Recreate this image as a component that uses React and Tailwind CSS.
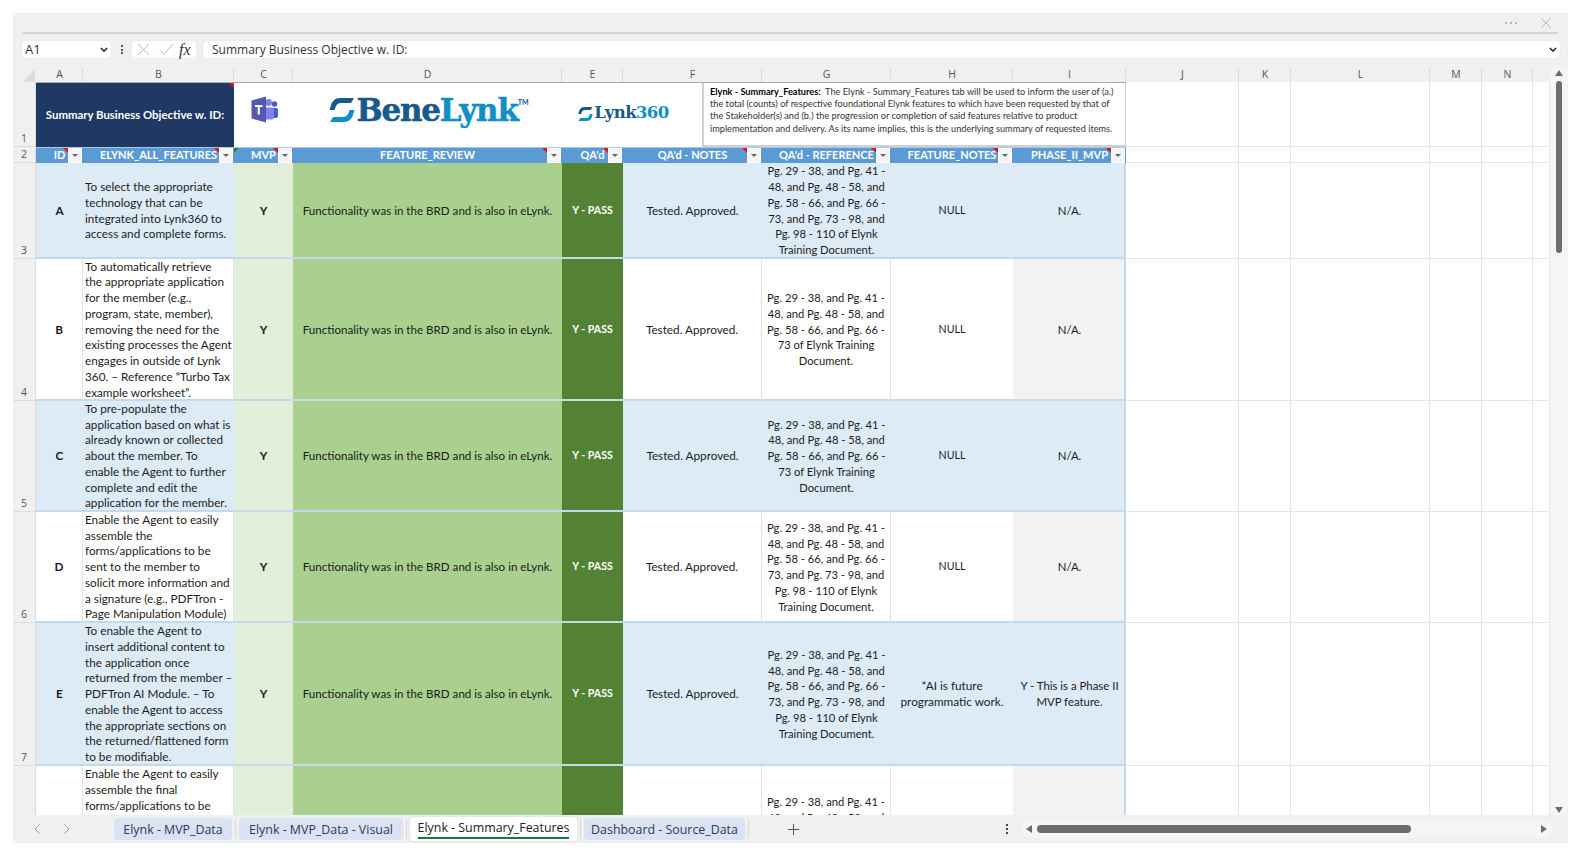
const COLS = ["A", "B", "C", "D", "E", "F", "G", "H", "I", "J", "K", "L", "M", "N"];
const SPARE = ["J", "K", "L", "M", "N", "O"];
const PASS = "Functionality was in the BRD and is also in eLynk.";

const ROWS = [
  {
    no: 3, id: "A", tint: true, feature: ["To select the appropriate", "technology that can be", "integrated into Lynk360 to", "access and complete forms."],
    ref: ["Pg. 29 - 38, and Pg. 41 -", "48, and Pg. 48 - 58, and", "Pg. 58 - 66, and Pg. 66 -", "73, and Pg. 73 - 98, and", "Pg. 98 - 110 of Elynk", "Training Document."],
    notes: ["NULL"], phase: ["N/A."],
  },
  {
    no: 4, id: "B", feature: ["To automatically retrieve", "the appropriate application", "for the member (e.g.,", "program, state, member),", "removing the need for the", "existing processes the Agent", "engages in outside of Lynk", "360. – Reference “Turbo Tax", "example worksheet”."],
    ref: ["Pg. 29 - 38, and Pg. 41 -", "48, and Pg. 48 - 58, and", "Pg. 58 - 66, and Pg. 66 -", "73 of Elynk Training", "Document."],
    notes: ["NULL"], phase: ["N/A."],
  },
  {
    no: 5, id: "C", tint: true, feature: ["To pre-populate the", "application based on what is", "already known or collected", "about the member. To", "enable the Agent to further", "complete and edit the", "application for the member."],
    ref: ["Pg. 29 - 38, and Pg. 41 -", "48, and Pg. 48 - 58, and", "Pg. 58 - 66, and Pg. 66 -", "73 of Elynk Training", "Document."],
    notes: ["NULL"], phase: ["N/A."],
  },
  {
    no: 6, id: "D", feature: ["Enable the Agent to easily", "assemble the", "forms/applications to be", "sent to the member to", "solicit more information and", "a signature (e.g., PDFTron -", "Page Manipulation Module)"],
    ref: ["Pg. 29 - 38, and Pg. 41 -", "48, and Pg. 48 - 58, and", "Pg. 58 - 66, and Pg. 66 -", "73, and Pg. 73 - 98, and", "Pg. 98 - 110 of Elynk", "Training Document."],
    notes: ["NULL"], phase: ["N/A."],
  },
  {
    no: 7, id: "E", tint: true, feature: ["To enable the Agent to", "insert additional content to", "the application once", "returned from the member –", "PDFTron AI Module. – To", "enable the Agent to access", "the appropriate sections on", "the returned/flattened form", "to be modifiable."],
    ref: ["Pg. 29 - 38, and Pg. 41 -", "48, and Pg. 48 - 58, and", "Pg. 58 - 66, and Pg. 66 -", "73, and Pg. 73 - 98, and", "Pg. 98 - 110 of Elynk", "Training Document."],
    notes: ["*AI is future", "programmatic work."], phase: ["Y - This is a Phase II", "MVP feature."],
  },
];

const HEADERS = [
  { label: "ID" },
  { label: "ELYNK_ALL_FEATURES" },
  { label: "MVP", green: true },
  { label: "FEATURE_REVIEW" },
  { label: "QA'd" },
  { label: "QA'd - NOTES" },
  { label: "QA'd - REFERENCE" },
  { label: "FEATURE_NOTES" },
  { label: "PHASE_II_MVP" },
];

function Lines({ lines }) {
  return (
    <div>
      {lines.map((l, i) => (
        <div key={i} className="h-[15.75px] leading-[15.75px] whitespace-nowrap">{l}</div>
      ))}
    </div>
  );
}

function RowHead({ children }) {
  return (
    <div className="flex items-end justify-center bg-[#f0f0f0] border-r border-b border-[#dcdcdc] text-[10.5px] leading-[15px] text-[#555] [font-family:'Open_Sans',sans-serif]">
      {children}
    </div>
  );
}

function Spare() {
  return SPARE.map((c) => (
    <div key={c} className="bg-white border-r border-b border-[#e6e6e6]" />
  ));
}

function Corner({ className }) {
  return <div className={`absolute top-0 w-0 h-0 border-t-[5px] border-l-[5px] border-l-transparent border-t-[#e8101c] ${className}`} />;
}

function HeaderCell({ label, green }) {
  return (
    <div className="relative flex items-center justify-center bg-[#5b9bd5] border-t border-[#a9c8e8] text-white font-bold text-[11px] whitespace-nowrap">
      {green && <div className="absolute top-0 left-0 w-0 h-0 border-t-[5px] border-r-[5px] border-r-transparent border-t-[#1f8a2d]" />}
      {label}
      <Corner className="right-[15px]" />
      <div className="absolute right-[1px] top-0 bottom-0 w-[14px] flex items-center justify-center bg-[#f4f4f4] border border-white">
        <div className="w-0 h-0 border-x-[3px] border-x-transparent border-t-[3px] border-t-[#666]" />
      </div>
    </div>
  );
}

function DataRow({ row }) {
  const tint = row.tint ? "bg-[#ddebf7]" : "bg-white border-r border-[#e3e3e3]";
  const base = "flex items-center justify-center text-center border-b-2 border-b-[#c3d9ee] pt-[1px]";
  return (
    <>
      <RowHead>{row.no}</RowHead>
      <div className={`${base} ${tint} font-bold`}>{row.id}</div>
      <div className={`${base} ${tint} !justify-start !text-left pl-[2px]`}><Lines lines={row.feature} /></div>
      <div className={`${base} bg-[#e2efda] font-bold`}>Y</div>
      <div className={`${base} bg-[#a9d08e] text-[11.6px]`}>{PASS}</div>
      <div className={`${base} bg-[#548235] text-white font-bold text-[10.6px]`}>Y - PASS</div>
      <div className={`${base} ${tint}`}>Tested. Approved.</div>
      <div className={`${base} ${tint} text-[11.2px]`}><Lines lines={row.ref} /></div>
      <div className={`${base} ${row.tint ? "bg-[#ddebf7]" : "bg-white"} ${row.notes.length === 1 ? "text-[10.6px]" : ""}`}><Lines lines={row.notes} /></div>
      <div className={`${base} ${row.tint ? "bg-[#ddebf7]" : "bg-[#f2f2f2]"} border-r-2 border-r-[#c3d9ee] pl-[2px] text-[11.4px]`}><Lines lines={row.phase} /></div>
      <Spare />
    </>
  );
}

function LastRow() {
  return (
    <>
      <RowHead />
      <div className="bg-white border-r border-[#e3e3e3]" />
      <div className="bg-white border-r border-[#e3e3e3] pl-[2px]">
        <Lines lines={["Enable the Agent to easily", "assemble the final", "forms/applications to be"]} />
      </div>
      <div className="bg-[#e2efda]" />
      <div className="bg-[#a9d08e]" />
      <div className="bg-[#548235]" />
      <div className="bg-white border-r border-[#e3e3e3]" />
      <div className="bg-white border-r border-[#e3e3e3] pt-[28px] text-center text-[11.2px]">
        <Lines lines={["Pg. 29 - 38, and Pg. 41 -", "48, and Pg. 48 - 58, and"]} />
      </div>
      <div className="bg-white" />
      <div className="bg-[#f2f2f2] border-r-2 border-r-[#c3d9ee]" />
      <Spare />
    </>
  );
}

function SwooshIcon({ className }) {
  return (
    <svg viewBox="0 0 26 24" className={className}>
      <path d="M25 0 L22 5 H12 C9.5 5 7.5 6.5 6.5 9 L5.5 12 H0.5 L2 7 C3.2 2.8 6.5 0 11 0 Z" fill="#17598a" />
      <path d="M25.5 12 L24 17 C22.8 21.2 19.5 24 15 24 H1 L4 19 H14 C16.5 19 18.5 17.5 19.5 15 L20.5 12 Z" fill="#0f8fc6" />
    </svg>
  );
}

function TeamsIcon() {
  return (
    <svg viewBox="0 0 27 27" className="w-[27px] h-[27px]">
      <circle cx="23.5" cy="8" r="2.8" fill="#5059c9" />
      <rect x="19" y="12" width="8" height="10" rx="2" fill="#5059c9" />
      <circle cx="17.5" cy="6.5" r="3.5" fill="#7b83eb" />
      <rect x="13" y="11.5" width="10" height="12" rx="2.5" fill="#7b83eb" />
      <path d="M0.5 4.5 L15 0.5 V26.5 L0.5 22.5 Z" fill="#5558af" />
      <path d="M4 9 H11.5 V11 H8.8 V18.5 H6.7 V11 H4 Z" fill="#fff" />
    </svg>
  );
}

function TitleStrip() {
  return (
    <div className="flex items-center justify-end h-[19px] pr-[17px] gap-[24px]">
      <div className="flex gap-[3px]">
        <span className="w-[2px] h-[2px] rounded-full bg-[#a8a8a8]" />
        <span className="w-[2px] h-[2px] rounded-full bg-[#a8a8a8]" />
        <span className="w-[2px] h-[2px] rounded-full bg-[#a8a8a8]" />
      </div>
      <svg viewBox="0 0 10 10" className="w-[10px] h-[10px]" stroke="#b0b0b0" strokeWidth="0.9">
        <path d="M0 0 L10 10 M10 0 L0 10" />
      </svg>
    </div>
  );
}

function FormulaBar() {
  return (
    <div className="flex items-stretch h-[19px] mt-[6px] ml-[8px] mr-[7px] [font-family:'Open_Sans',sans-serif] text-[12px] text-[#333]">
      <div className="flex items-center justify-between w-[91px] bg-white rounded-[5px] border border-[#ececec] pl-[3px] pr-[3px]">
        <span className="text-[13px]">A1</span>
        <svg viewBox="0 0 10 6" className="w-[8px] h-[5px]" fill="none" stroke="#222" strokeWidth="1.8"><path d="M1 1 L5 5 L9 1" /></svg>
      </div>
      <div className="flex flex-col items-center justify-center gap-[1.5px] w-[19px]">
        <span className="w-[2px] h-[2px] bg-[#555]" />
        <span className="w-[2px] h-[2px] bg-[#555]" />
        <span className="w-[2px] h-[2px] bg-[#555]" />
      </div>
      <div className="flex items-center w-[66px] bg-white rounded-[5px] border border-[#ececec] pl-[6px]">
        <svg viewBox="0 0 11 11" className="w-[11px] h-[11px]" stroke="#bcbcbc" fill="none"><path d="M0 0 L11 11 M11 0 L0 11" /></svg>
        <svg viewBox="0 0 14 11" className="w-[14px] h-[11px] ml-[10px]" stroke="#bcbcbc" fill="none"><path d="M0.5 6 L5 10.5 L13.5 0.5" /></svg>
        <span className="ml-[6px] text-[16px] italic text-[#333] [font-family:'Liberation_Serif',serif]">fx</span>
      </div>
      <div className="flex items-center justify-between flex-1 ml-[5px] bg-white rounded-[5px] border border-[#ececec] pl-[9px] pr-[3px]">
        <span>Summary Business Objective w. ID:</span>
        <svg viewBox="0 0 10 6" className="w-[8px] h-[5px]" fill="none" stroke="#222" strokeWidth="1.8"><path d="M1 1 L5 5 L9 1" /></svg>
      </div>
    </div>
  );
}

function BoxText() {
  return (
    <>
      <div className="whitespace-nowrap"><b className="text-black">Elynk - Summary_Features:</b>&nbsp; The Elynk - Summary_Features tab will be used to inform the user of (a.)</div>
      <div className="whitespace-nowrap">the total (counts) of respective foundational Elynk features to which have been requested by that of</div>
      <div className="whitespace-nowrap">the Stakeholder(s) and (b.) the progression or completion of said features relative to product</div>
      <div className="whitespace-nowrap">implementation and delivery. As its name implies, this is the underlying summary of requested items.</div>
    </>
  );
}

function Sheet() {
  return (
    <div className="grid grid-cols-[23px_47px_151px_59px_269px_61px_139px_129px_122px_113px_113px_52px_139px_52px_51px_17px] grid-rows-[14px_65px_16px_96px_142px_111px_111px_143px_150px] w-[1537px] h-[747px] overflow-hidden [font-family:Lato,sans-serif] text-[11.75px] text-[#1c1c1c]">
      {/* column letters */}
      <div className="relative bg-[#f0f0f0]">
        <div className="absolute right-[1px] bottom-0 w-0 h-0 border-b-[13px] border-l-[12px] border-l-transparent border-b-[#dcdcdc]" />
      </div>
      {COLS.map((c) => (
        <div key={c} className="flex items-center justify-center bg-[#f0f0f0] border-r border-[#dcdcdc] pl-[1px] text-[10.5px] text-[#555] [font-family:'Open_Sans',sans-serif]">{c}</div>
      ))}
      <div className="bg-[#f0f0f0]" />

      {/* row 1: title and logos */}
      <RowHead>1</RowHead>
      <div className="col-span-2 relative flex items-center justify-center bg-[#1f3864] text-white font-bold text-[11.4px] border-t border-[#aaa]">
        Summary Business Objective w. ID:
        <Corner className="right-0" />
      </div>
      <div className="flex items-center justify-center bg-white border-t border-[#aaa] pl-[2px] pb-[11px]"><TeamsIcon /></div>
      <div className="flex items-center justify-center bg-white border-t border-[#aaa] pl-[3px] pb-[11px]">
        <SwooshIcon className="w-[26px] h-[24px] mr-[1px]" />
        <span className="[font-family:'DejaVu_Serif',serif] font-bold text-[31px] leading-[30px] tracking-[-1.2px] [-webkit-text-stroke:0.5px]">
          <span className="text-[#17598a]">Bene</span><span className="text-[#0f8fc6]">Lynk</span>
        </span>
        <span className="self-start mt-[14px] text-[7px] font-bold text-[#17598a]">TM</span>
      </div>
      <div className="col-span-5 flex bg-white border-t border-[#aaa]">
        <div className="flex items-center justify-center shrink-0 w-[140px] pr-[17px] pb-[3px]">
          <SwooshIcon className="w-[15px] h-[14px] mr-[1px]" />
          <span className="[font-family:'DejaVu_Serif',serif] font-bold text-[16.5px] tracking-[-0.6px]">
            <span className="text-[#17598a]">Lynk</span><span className="text-[#0f8fc6]">360</span>
          </span>
        </div>
        <div className="flex-1 min-w-0 h-[64px] bg-white border-l-2 border-b-2 border-r border-[#d0d0d0] pl-[6px] pt-[3px] text-[9.2px] leading-[12.2px] text-[#333]">
          <BoxText />
        </div>
      </div>
      <Spare />

      {/* row 2: table header */}
      <RowHead>2</RowHead>
      {HEADERS.map((h) => <HeaderCell key={h.label} {...h} />)}
      <Spare />

      {ROWS.map((r) => <DataRow key={r.no} row={r} />)}
      <LastRow />
    </div>
  );
}

function VScroll() {
  return (
    <div className="flex flex-col items-center w-[18px] h-[747px] bg-[#f5f5f5] rounded-[5px] pt-[2px] pb-[2px]">
      <div className="w-0 h-0 border-x-[4px] border-x-transparent border-b-[6px] border-b-[#6d6d6d]" />
      <div className="w-[6px] h-[172px] mt-[5px] rounded-full bg-[#6d6d6d]" />
      <div className="flex-1" />
      <div className="w-0 h-0 border-x-[4px] border-x-transparent border-t-[6px] border-t-[#6d6d6d]" />
    </div>
  );
}

function Tab({ label, active, className }) {
  if (active) {
    return (
      <div className={`flex flex-col items-center h-[24px] bg-white rounded-[4px] shadow-[0_0_2px_rgba(0,0,0,0.15)] ${className}`}>
        <span className="mt-[3px] leading-[16px] text-[#222]">{label}</span>
        <span className="w-[151px] h-[2px] mt-[1px] bg-[#107c41]" />
      </div>
    );
  }
  return (
    <div className={`flex items-center justify-center h-[22px] pt-[2px] bg-[#dae3f3] rounded-[4px] text-[#2d3a52] ${className}`}>{label}</div>
  );
}

function TabBar() {
  return (
    <div className="flex items-center h-[28px] pl-[21px] [font-family:'Open_Sans',sans-serif] text-[12.4px]">
      <svg viewBox="0 0 6 10" className="w-[6px] h-[10px]" fill="none" stroke="#9a9a9a"><path d="M5.5 0.5 L1 5 L5.5 9.5" /></svg>
      <svg viewBox="0 0 6 10" className="w-[6px] h-[10px] ml-[24px]" fill="none" stroke="#9a9a9a"><path d="M0.5 0.5 L5 5 L0.5 9.5" /></svg>
      <Tab label="Elynk - MVP_Data" className="w-[118px] ml-[44px]" />
      <span className="w-px h-[20px] mx-[3px] bg-[#d8d8d8]" />
      <Tab label="Elynk - MVP_Data - Visual" className="w-[164px]" />
      <span className="w-px h-[20px] mx-[3px] bg-[#d8d8d8]" />
      <Tab label="Elynk - Summary_Features" active className="w-[167px]" />
      <span className="w-px h-[20px] mx-[3px] bg-[#d8d8d8]" />
      <Tab label="Dashboard - Source_Data" className="w-[161px]" />
      <span className="w-px h-[20px] ml-[3px] bg-[#d8d8d8]" />
      <svg viewBox="0 0 11 11" className="w-[11px] h-[11px] ml-[39px]" stroke="#555" fill="none"><path d="M5.5 0 V11 M0 5.5 H11" /></svg>
      <div className="flex flex-col gap-[2px] ml-[207px]">
        <span className="w-[2px] h-[2px] bg-[#444]" />
        <span className="w-[2px] h-[2px] bg-[#444]" />
        <span className="w-[2px] h-[2px] bg-[#444]" />
      </div>
      <div className="flex items-center w-[530px] h-[18px] ml-[14px] bg-[#f5f5f5] rounded-full pl-[4px] pr-[5px]">
        <div className="w-0 h-0 border-y-[4px] border-y-transparent border-r-[6px] border-r-[#6d6d6d]" />
        <div className="w-[374px] h-[8px] ml-[5px] rounded-full bg-[#6d6d6d]" />
        <div className="flex-1" />
        <div className="w-0 h-0 border-y-[4px] border-y-transparent border-l-[6px] border-l-[#6d6d6d]" />
      </div>
    </div>
  );
}

export default function App() {
  return (
    <div className="w-[1581px] h-[853px] bg-white pt-[13px] pl-[13px] overflow-hidden">
      <div className="w-[1555px] h-[830px] bg-[#f0f0f0]">
        <TitleStrip />
        <div className="h-[2px] mx-[10px] bg-[#d4d4d4]" />
        <FormulaBar />
        <div className="flex mt-[9px]">
          <Sheet />
          <VScroll />
        </div>
        <TabBar />
      </div>
    </div>
  );
}
